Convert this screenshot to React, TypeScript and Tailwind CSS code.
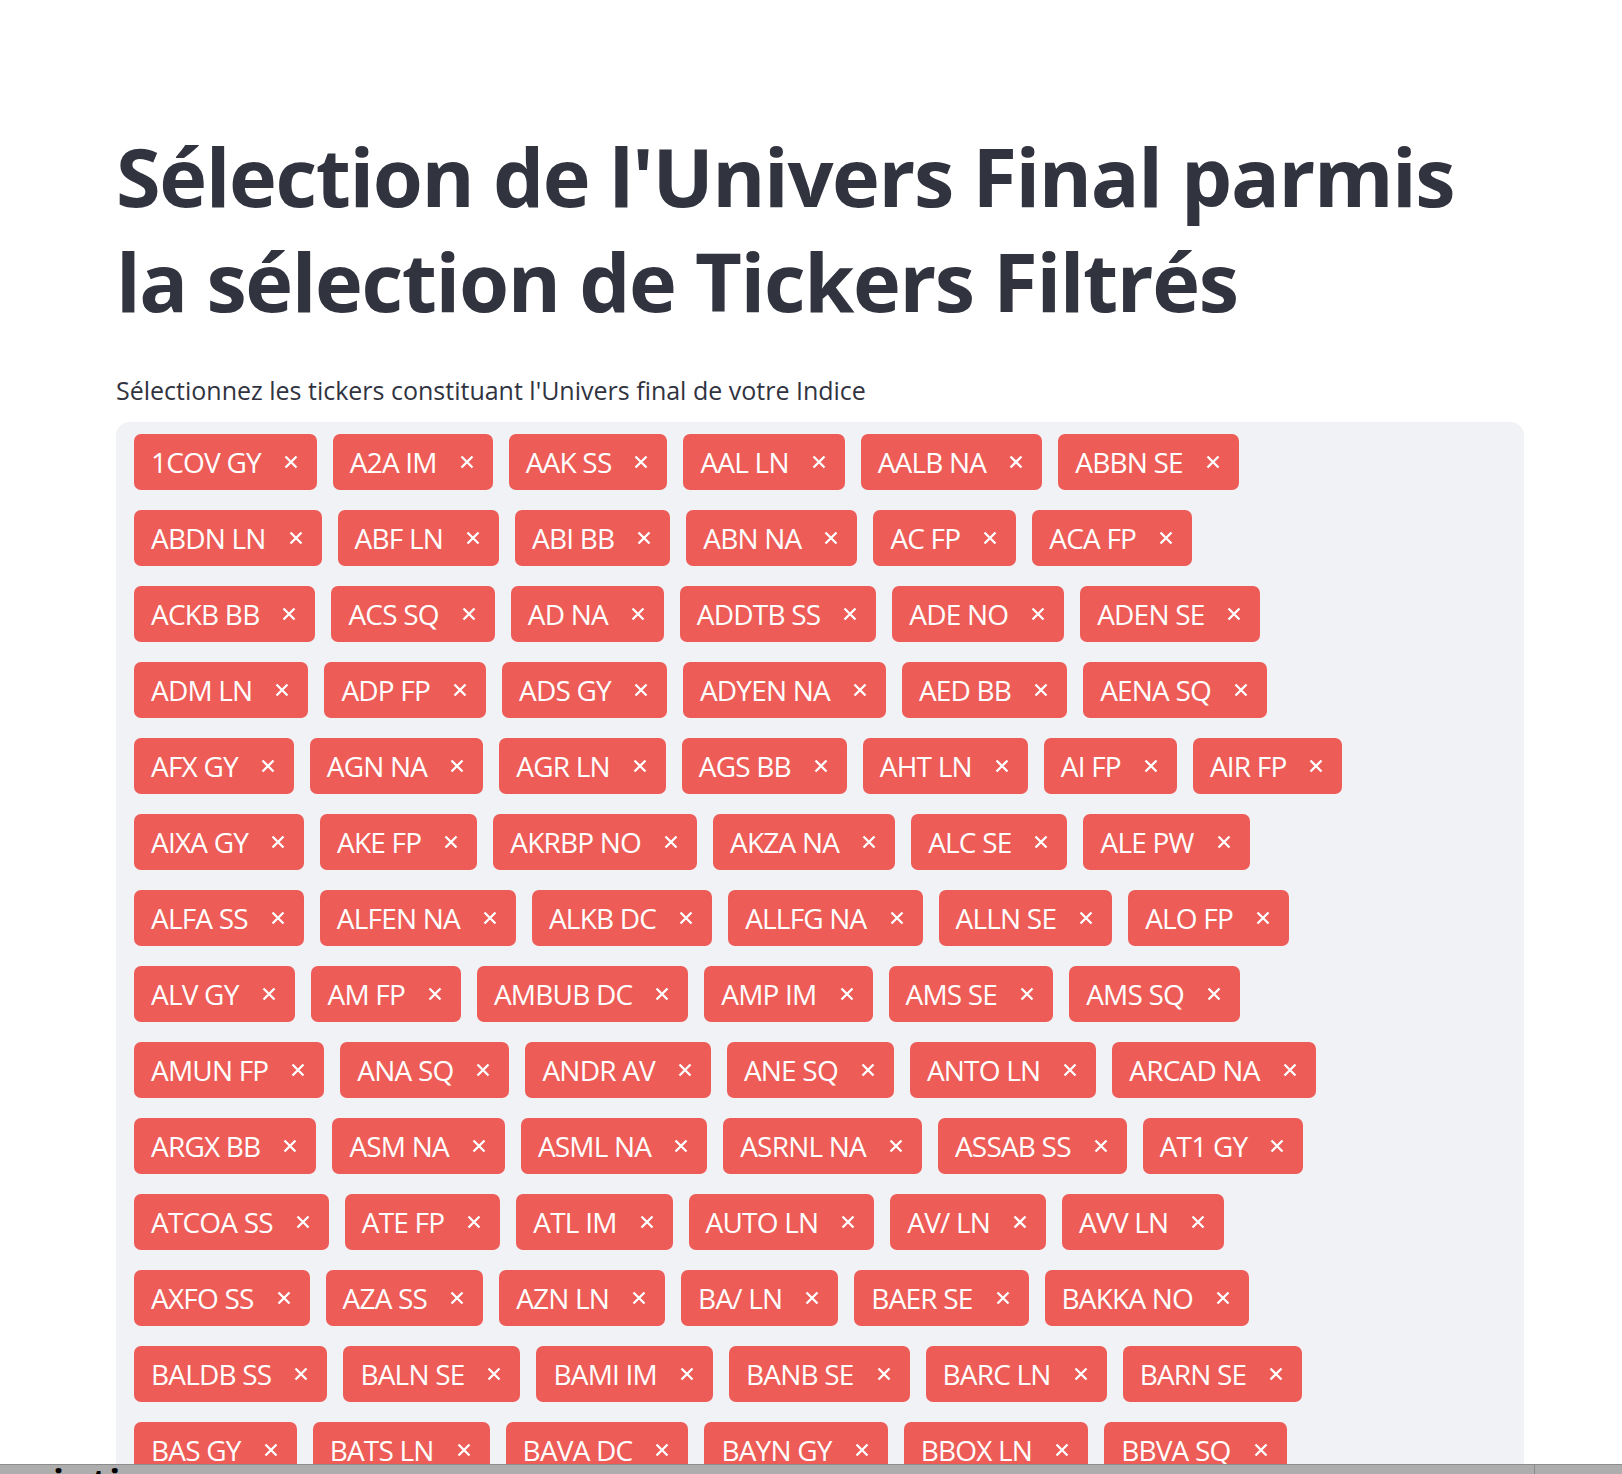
import React from "react";

const rows: string[][] = [
  ["1COV GY", "A2A IM", "AAK SS", "AAL LN", "AALB NA", "ABBN SE"],
  ["ABDN LN", "ABF LN", "ABI BB", "ABN NA", "AC FP", "ACA FP"],
  ["ACKB BB", "ACS SQ", "AD NA", "ADDTB SS", "ADE NO", "ADEN SE"],
  ["ADM LN", "ADP FP", "ADS GY", "ADYEN NA", "AED BB", "AENA SQ"],
  ["AFX GY", "AGN NA", "AGR LN", "AGS BB", "AHT LN", "AI FP", "AIR FP"],
  ["AIXA GY", "AKE FP", "AKRBP NO", "AKZA NA", "ALC SE", "ALE PW"],
  ["ALFA SS", "ALFEN NA", "ALKB DC", "ALLFG NA", "ALLN SE", "ALO FP"],
  ["ALV GY", "AM FP", "AMBUB DC", "AMP IM", "AMS SE", "AMS SQ"],
  ["AMUN FP", "ANA SQ", "ANDR AV", "ANE SQ", "ANTO LN", "ARCAD NA"],
  ["ARGX BB", "ASM NA", "ASML NA", "ASRNL NA", "ASSAB SS", "AT1 GY"],
  ["ATCOA SS", "ATE FP", "ATL IM", "AUTO LN", "AV/ LN", "AVV LN"],
  ["AXFO SS", "AZA SS", "AZN LN", "BA/ LN", "BAER SE", "BAKKA NO"],
  ["BALDB SS", "BALN SE", "BAMI IM", "BANB SE", "BARC LN", "BARN SE"],
  ["BAS GY", "BATS LN", "BAVA DC", "BAYN GY", "BBOX LN", "BBVA SQ"],
  ["BBY SQ", "BC IM", "BEI GY", "BEKB BB", "BESI NA", "BFF IM"],
];

function CloseIcon() {
  return (
    <svg width="14" height="14" viewBox="0 0 14 14" className="shrink-0">
      <path d="M1.5 1.5 L12.5 12.5 M12.5 1.5 L1.5 12.5" stroke="#ffffff" strokeWidth="2.3" fill="none" />
    </svg>
  );
}

function Tag({ label }: { label: string }) {
  return (
    <div className="flex h-[56px] items-center rounded-[7px] bg-[#ED5C57] pl-[17px] pr-[19px] text-white">
      <span className="whitespace-pre text-[28px] leading-none tracking-[-0.8px]">{label}</span>
      <span className="ml-[23px] flex items-center">
        <CloseIcon />
      </span>
    </div>
  );
}

export default function App() {
  return (
    <div className="relative h-[1474px] w-[1622px] overflow-hidden bg-white font-['Open_Sans','Noto_Sans',sans-serif] text-[#31333F]">
      <div className="ml-[116px] w-[1408px] pt-[123px]">
        <h1 className="text-[81px] font-bold leading-[105px] tracking-[-1.4px]">
          Sélection de l'Univers Final parmis
          <br />
          la sélection de Tickers Filtrés
        </h1>
        <p className="mt-[41px] text-[25px] leading-[32px]">
          Sélectionnez les tickers constituant l'Univers final de votre Indice
        </p>
        <div className="mt-[16px] rounded-[14px] bg-[#F0F2F6] pl-[18px] pt-[12px] pb-[40px]">
          <div className="flex flex-col gap-[20px]">
            {rows.map((row, i) => (
              <div key={i} className="flex gap-[16px]">
                {row.map((t) => (
                  <Tag key={t} label={t} />
                ))}
              </div>
            ))}
          </div>
        </div>
      </div>
      <div className="absolute bottom-0 left-0 h-[10px] w-[1622px] overflow-hidden border-t border-[#8c8c8c] bg-[#ADADAD]">
        <span className="absolute left-[-8px] top-[-1px] whitespace-pre text-[36px] font-bold leading-[36px] tracking-[2px] text-black">
          maintien
        </span>
        <div className="absolute left-[1534px] top-0 h-full w-px bg-[#8a8a8a]" />
      </div>
    </div>
  );
}
